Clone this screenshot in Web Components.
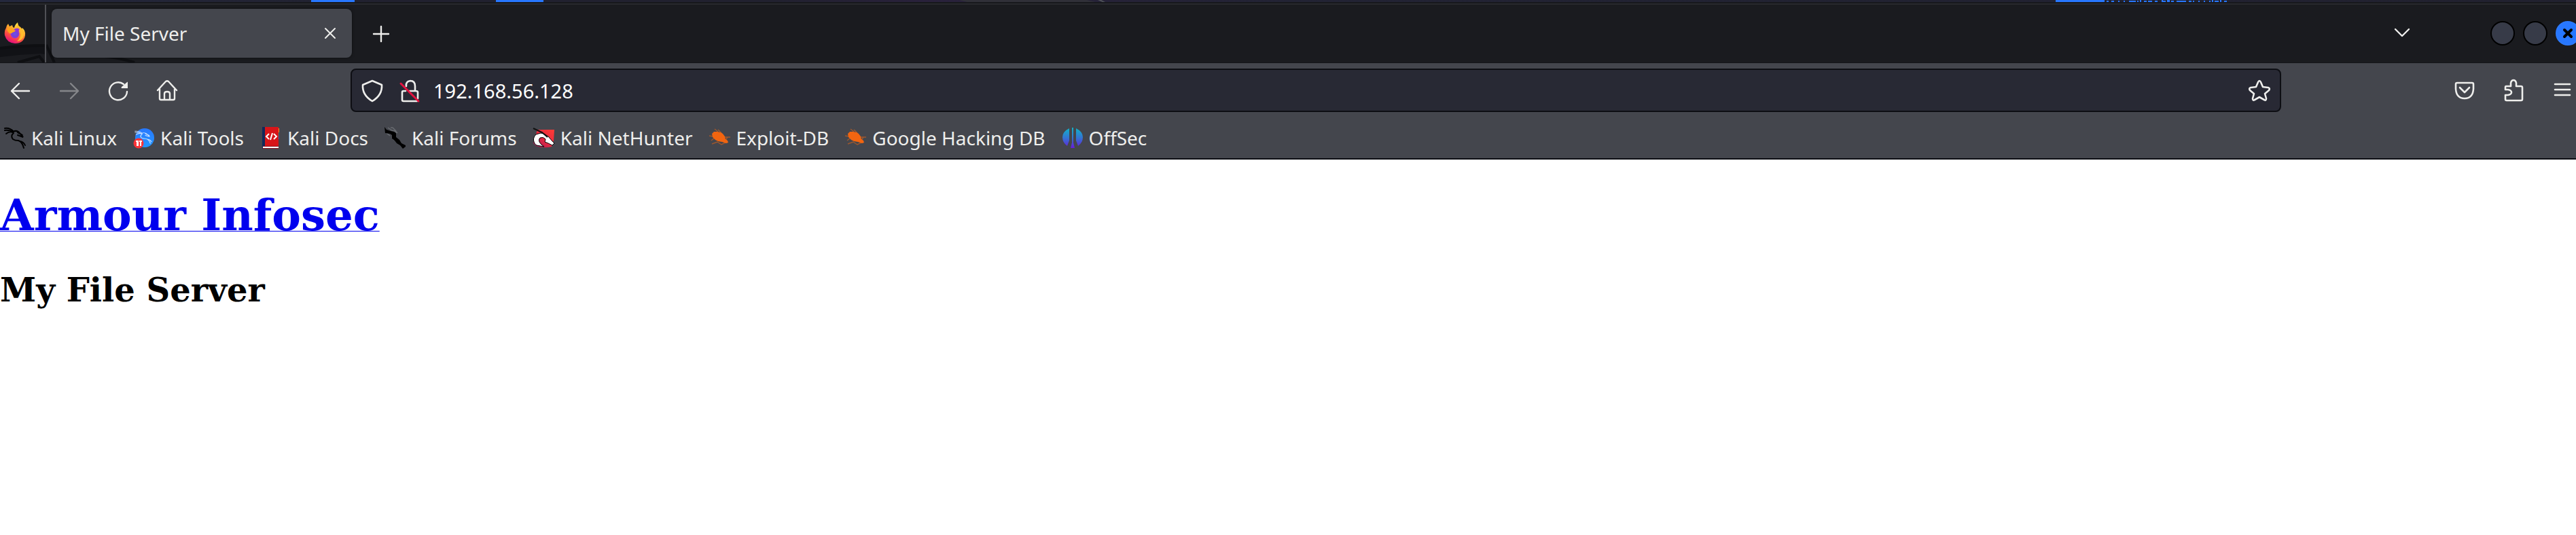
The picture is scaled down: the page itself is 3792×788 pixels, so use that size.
<!DOCTYPE html>
<html lang="en">
<head>
<meta charset="utf-8">
<title>My File Server</title>
<style>
  html, body { margin: 0; min-height: 100%; background: #fff; }
  body { font-family: "Noto Sans", "Open Sans", sans-serif; font-size: 28px; color: #eeeeec; overflow-x: hidden; }
</style>
</head>
<body>
<browser-window>
  <desktop-strip slot="desktop"></desktop-strip>
  <tab-strip slot="tabs"><browser-tab>My File Server</browser-tab></tab-strip>
  <nav-toolbar slot="toolbar" address="192.168.56.128"></nav-toolbar>
  <bookmarks-bar slot="bookmarks">
    <bookmark-link icon="kali">Kali Linux</bookmark-link>
    <bookmark-link icon="tools">Kali Tools</bookmark-link>
    <bookmark-link icon="docs">Kali Docs</bookmark-link>
    <bookmark-link icon="forums">Kali Forums</bookmark-link>
    <bookmark-link icon="nethunter">Kali NetHunter</bookmark-link>
    <bookmark-link icon="exploit">Exploit-DB</bookmark-link>
    <bookmark-link icon="exploit">Google Hacking DB</bookmark-link>
    <bookmark-link icon="offsec">OffSec</bookmark-link>
  </bookmarks-bar>
  <server-page></server-page>
</browser-window>

<script>
const line = 'fill="none" stroke="currentColor" stroke-linecap="round" stroke-linejoin="round"';
const dragon = `<path d="M1 2Q9 1 14 7M1 5Q8 4 13 8M3 10Q8 6 13 8"/><path d="M13 7Q19 4 23 9L28 15Q23 13 20 12M20 8Q24 10 27 12"/><path d="M14 9Q9 13 13 18Q16 20 21 20Q27 22 29 31M23 21Q29 22 31 27"/>`;
const icons = {
  firefox: `<defs><linearGradient id="f" x1=".8" y1="0" x2=".3" y2="1"><stop offset=".1" stop-color="#fff04b"/><stop offset=".4" stop-color="#ffa52d"/><stop offset=".7" stop-color="#ff4a42"/><stop offset="1" stop-color="#e00786"/></linearGradient><radialGradient id="g"><stop offset="0" stop-color="#6a52e8"/><stop offset=".6" stop-color="#7542d8"/><stop offset="1" stop-color="#9a35d0"/></radialGradient></defs>
    <path fill="url(#f)" d="M3 8Q4 4 6 2L8 6L12 4L13 7L15 8Q16 3 20 0Q20 5 24 7L26 10L27 8Q32 13 31 19Q29 31 16 31Q4 30 1 19Q0 13 3 8Z"/><path fill="#ffbb2c" d="M18 8Q20 3 20 0Q20 5 24 7Q30 12 29 19Q27 27 19 28Q26 21 24 14Q23 9 18 8Z"/><circle cx="16" cy="17" r="6.5" fill="url(#g)"/><path fill="#8e35d4" d="M15 10Q19 7 23 10Q21 11 22 14Q19 13 16 14Z"/><path fill="#ffa21c" d="M4 9L8 7L12 9Q13 11 17 12Q16 14 12 15Q11 17 8 16Q5 14 4 9Z"/>`,
  close: `<path ${line} stroke-width="2" d="M9 9L23 23M23 9L9 23"/>`,
  plus: `<path ${line} stroke-width="2.4" d="M5 17H27M16 6V28"/>`,
  chevron: `<path ${line} stroke-width="2.4" d="M6 10L16 20L26 10"/>`,
  back: `<path ${line} stroke-width="2.4" d="M3 17H29M14 6L3 17L14 28"/>`,
  forward: `<path ${line} stroke-width="2.4" d="M3 17H29M18 6L29 17L18 28"/>`,
  reload: `<path ${line} stroke-width="2.4" d="M29 18A13 13 0 1 1 24 7"/><path fill="currentColor" d="M30 4V13H21Q20 12 21 11L29 4Q30 3 30 4Z"/>`,
  home: `<path ${line} stroke-width="2.4" d="M2 16L14 3Q16 1.500 18 3L30 16M5 14V28Q5 30 7 30H25Q27 30 27 28V14M12 30V21Q12 18 16 18T20 21V30"/>`,
  shield: `<path ${line} stroke-width="2.6" d="M16 2L30 8Q31 23 16 32Q1 23 2 8Z"/>`,
  lock: `<path ${line} stroke-width="2.6" d="M10 10Q9 3 16 2Q23 2 23 10V17M9 17H6Q4 17 4 19V30Q4 32 6 32H26M15 17H24Q27 17 27 19V28"/><path d="M2 6L28 32" fill="none" stroke="#e3123f" stroke-width="3" stroke-linecap="round"/>`,
  star: `<path ${line} stroke-width="2.6" d="M14 4Q16 0 18 4L21 11L29 12Q32 13 30 16L24 21L26 28Q26 32 23 30L16 26L9 30Q6 32 6 28L8 21L2 16Q0 13 3 12L11 11Z"/>`,
  pocket: `<path ${line} stroke-width="2.6" d="M5 5H27Q29 5 29 7V14Q28 28 16 28Q4 28 3 14V7Q3 5 5 5ZM9 12L16 19L23 12"/>`,
  puzzle: `<path ${line} stroke-width="2.6" d="M5 10H12V5Q13 1 16 1T20 5V10H27Q29 10 29 12V29Q29 31 27 31H6Q4 31 4 29V23H8Q13 22 13 19T8 15H4V12Q4 10 5 10Z"/>`,
  menu: `<path ${line} stroke-width="2.6" d="M5 7H27M5 15H27M5 23H27"/>`,
  kali: `<g fill="none" stroke="#000" stroke-width="2" stroke-linecap="round">${dragon}</g>`,
  tools: `<defs><linearGradient id="t" x2="0" y2="1"><stop stop-color="#2878ff"/><stop offset="1" stop-color="#2497ff"/></linearGradient></defs><circle cx="17" cy="16" r="14" fill="url(#t)"/><g fill="none" stroke="#cde3ff" stroke-width="1.5" stroke-linecap="round" transform="translate(2 5) scale(.8 .62)">${dragon}</g><circle cx="8" cy="24" r="7.5" fill="#fa3338"/><path d="M4 21H7V28M6 21V28M9 21H13M11 21V28" fill="none" stroke="#fff" stroke-width="2"/>`,
  docs: `<path fill="#102a5b" d="M3 0H9V32H3Z"/><path fill="#d71519" d="M7 0H27V32H7Z"/><path fill="#f7931e" d="M27 2H28V8H27Z"/><path fill="#287b7a" d="M27 8H28V14H27Z"/><path fill="#2a62b8" d="M27 14H28V18H27Z"/><path fill="#8e1423" d="M4 28H27V32H4Z"/><path fill="#fff" d="M4 29H27V31H4Z"/><path d="M13 10L9 14L13 18M20 10L24 14L20 18M18 9L15 19" fill="none" stroke="#fff" stroke-width="2"/>`,
  forums: `<path d="M5 1L11 5L15 6L18 9M9 1H12L17 6M14 3L19 9M3 9L8 13M11 15L14 19" fill="none" stroke="#686b70" stroke-width="1.5"/><path fill="#000" d="M0 0L3 4L9 6L14 7L17 9L17 15L22 19L25 24L31 27V29L27 32L23 27L18 24L15 20L11 17V12L8 10L1 9Z"/>`,
  nethunter: `<defs><linearGradient id="n" x1="1" y1="0" x2="0" y2="1"><stop stop-color="#ff3c35"/><stop offset=".5" stop-color="#e62a40"/><stop offset="1" stop-color="#a0175c"/></linearGradient></defs><path fill="url(#n)" d="M6 4H31L30 20L27 29Q16 32 4 28L0 24Z"/><path fill="#fff" stroke="#000" d="M1 22Q-1 16 4 11L11 9L16 10L22 14L29 22L31 24L28 27L22 24L17 22L18 18Q15 14 10 16Q6 20 12 26L16 29L5 27Q2 26 1 22Z"/><path d="M0 2L13 8L21 15" fill="none" stroke="#111" stroke-width="2"/>`,
  exploit: `<path d="M0 13L6 14M3 20L8 16M4 25L12 22L18 26L24 23L21 21M8 3L13 7M13 4L17 8L22 15H31M27 15L23 21" fill="none" stroke="#9d582f" stroke-width="1.5"/><path fill="#f26510" d="M4 10L7 7L12 7L17 8L20 10L23 14L24 18L27 20L28 23L25 24L19 22L13 21L9 19L5 15Z"/>`,
  offsec: `<defs><linearGradient id="p" gradientUnits="userSpaceOnUse" x1="0" y1="1" x2="0" y2="31"><stop stop-color="#0fb5c8"/><stop offset=".5" stop-color="#3375d3"/><stop offset="1" stop-color="#661cda"/></linearGradient></defs><path fill="url(#p)" d="M11 2V20L8 28Q1 23 1 15T11 2ZM15 1H17V23L19 31H13L15 23ZM21 2Q31 7 31 15T24 28L21 20Z"/>`
};
const svg = name => `<svg viewBox="0 0 32 32" aria-hidden="true">${icons[name]}</svg>`;
const base = `:host,*{box-sizing:border-box}svg{display:block;width:32px;height:32px;flex:none;overflow:visible}button{font:inherit;color:inherit;border:0;background:none;padding:0;margin:0;flex:none}`;

class Base extends HTMLElement {
  connectedCallback() {
    if (this.shadowRoot) return;
    this.attachShadow({ mode: 'open' }).innerHTML = `<style>${base}${this.css()}</style>${this.html()}`;
  }
}

customElements.define('browser-window', class extends Base {
  css() { return `:host{display:flex;flex-direction:column;min-height:100vh;background:#fff}main{flex:1}`; }
  html() { return `<slot name="desktop"></slot><slot name="tabs"></slot><slot name="toolbar"></slot><slot name="bookmarks"></slot><main><slot></slot></main>`; }
});

/* Sliver of the desktop panel that shows above the window. */
customElements.define('desktop-strip', class extends Base {
  css() { return `:host{display:flex;justify-content:space-between;height:5px;background:linear-gradient(90deg,#24283d,#21212f 15%,#21212f 30%,#29213b 36%,#222334 50%,#21212f);border-bottom:2px solid #17181c;overflow:hidden}svg{height:3px}.l{width:1700px}.r{width:766px}`; }
  html() {
    const dots = [[75,3],[82,4],[92,2],[100,2],[108,10],[120,2],[124,2],[130,4],[136,6],[146,4],[156,6],[164,4],[170,4],[178,14],[196,4],[202,2],[210,2],[218,2],[226,2],[234,6],[242,2],[248,4]];
    return `<svg class="l" viewBox="0 0 1700 3"><path fill="#2777ff" d="M458 0H522V3H458ZM730 0H800V3H730Z"/><path fill="#303038" d="M1424 3L1412 0H1600L1612 3Z"/><path fill="#50545a" d="M1616 0H1621L1627 3H1623Z"/></svg>
    <svg class="r" viewBox="0 0 766 3"><path fill="#2777ff" d="M0 0H72V3H0Z${dots.map(([x, w]) => `M${x} 1h${w}v2h-${w}Z`).join('')}M124 0h2v3h-2ZM156 0h2v2h-2ZM164 0h4v3h-4ZM230 0h2v3h-2ZM242 0h2v3h-2Z"/></svg>`;
  }
});

customElements.define('tab-strip', class extends Base {
  css() { return `:host{display:flex;align-items:center;height:88px;padding:6px 0 7px 6px;background:#1a1b1f;border-top:2px solid #28292d;border-bottom:1px solid #141519;overflow:hidden;position:relative}
    .art{position:absolute;left:0;bottom:0;width:240px;height:26px}
    .sep{width:2px;align-self:stretch;margin:-8px 8px -8px 28px;background:#505156;position:relative}
    .new{margin-left:27px}.list{margin-left:auto}
    .win{display:flex;gap:12px;margin:0 -6px 0 114px}
    .win button{width:36px;height:36px;border-radius:50%;border:2px solid #000;background:#373b48;display:grid;place-items:center}
    .win .x{background:#2777ff;border-color:#2c7aff;color:#000}.x svg{width:16px;height:16px}`; }
  html() { return `<svg class="art" viewBox="0 0 240 26"><path d="M0 5Q30 0 66 0V14L60 13Q30 14 0 18Z" fill="#111216"/><path d="M0 5Q30 1 66 1M26 26L58 17L65 26M68 0L80 26M146 16Q176 19 198 26" fill="none" stroke="#0e0f12" stroke-width="4"/></svg>
    ${svg('firefox')}<span class="sep"></span><slot></slot>
    <button class="new" aria-label="New tab">${svg('plus')}</button><button class="list" aria-label="List all tabs">${svg('chevron')}</button>
    <div class="win"><button aria-label="Minimize"></button><button aria-label="Maximize"></button><button class="x" aria-label="Close window"><svg viewBox="0 0 16 16"><path d="M3 3L13 13M13 3L3 13" fill="none" stroke="currentColor" stroke-width="4" stroke-linecap="round"/></svg></button></div>`; }
});

customElements.define('browser-tab', class extends Base {
  css() { return `:host{display:flex;align-items:center;justify-content:space-between;width:442px;height:72px;padding:0 16px;background:#44464d;border-radius:8px;box-shadow:0 0 4px #0008;white-space:nowrap;position:relative}`; }
  html() { return `<span><slot></slot></span><button aria-label="Close tab">${svg('close')}</button>`; }
});

customElements.define('nav-toolbar', class extends Base {
  css() { return `:host{display:flex;align-items:center;padding:8px 4px 8px 14px;background:#44464d}
    nav{display:flex;gap:40px;flex:none}[disabled]{color:#85868a}
    form{flex:1;min-width:0;display:flex;align-items:center;height:64px;margin:0 254px;padding:0 14px;border:2px solid #0d0e13;border-radius:8px;background:#282934}
    .lock{margin:0 18px 0 24px}
    input{flex:1;min-width:0;height:40px;border:0;padding:0;background:none;color:#fff;font:inherit;font-size:29px;outline:0}`; }
  html() { return `<nav aria-label="Navigation"><button aria-label="Back">${svg('back')}</button><button aria-label="Forward" disabled>${svg('forward')}</button><button aria-label="Reload">${svg('reload')}</button><button aria-label="Home">${svg('home')}</button></nav>
    <form><button type="button" aria-label="Tracking protection">${svg('shield')}</button><button class="lock" type="button" aria-label="Connection not secure">${svg('lock')}</button><input type="text" aria-label="Address" value="${this.getAttribute('address')}"><button type="button" aria-label="Bookmark this page">${svg('star')}</button></form>
    <nav aria-label="Tools"><button aria-label="Save to Pocket">${svg('pocket')}</button><button aria-label="Extensions">${svg('puzzle')}</button><button aria-label="Application menu">${svg('menu')}</button></nav>`; }
});

customElements.define('bookmarks-bar', class extends Base {
  css() { return `:host{display:flex;align-items:center;gap:24px;height:62px;padding:0 6px;background:#44464d;border-bottom:2px solid #0d0e13}`; }
  html() { return `<slot></slot>`; }
});

customElements.define('bookmark-link', class extends Base {
  css() { return `:host{display:block;flex:none}a{display:flex;align-items:center;gap:8px;color:inherit;text-decoration:none;white-space:nowrap}`; }
  html() { return `<a href="#">${svg(this.getAttribute('icon'))}<span><slot></slot></span></a>`; }
});

customElements.define('server-page', class extends Base {
  css() { return `:host{display:block;padding-top:44px;color:#000;font-family:"DejaVu Serif",serif;font-weight:bold}
    h1{font-size:64px;line-height:76px;margin:0 0 44px}h2{font-size:48px;line-height:56px;margin:0}
    a{color:#00e;text-decoration-thickness:1px}`; }
  html() { return `<h1><a href="#">Armour Infosec</a></h1><h2>My File Server</h2>`; }
});
</script>
</body>
</html>
